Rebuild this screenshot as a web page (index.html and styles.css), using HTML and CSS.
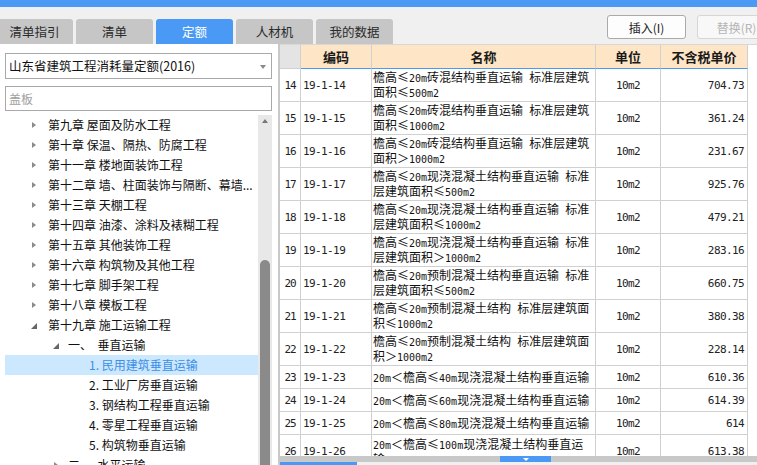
FILE: index.html
```html
<!DOCTYPE html>
<html lang="zh-CN">
<head>
<meta charset="utf-8">
<title>定额</title>
<link rel="stylesheet" href="styles.css">
</head>
<body>
<div class="app">
  <div class="topbar"></div>
  <div class="toolbar">
    <div class="tabs">
      <div class="tab">清单指引</div>
      <div class="tab">清单</div>
      <div class="tab active">定额</div>
      <div class="tab">人材机</div>
      <div class="tab">我的数据</div>
    </div>
    <div class="actions">
      <button class="btn">插入(I)</button>
      <button class="btn disabled">替换(R)</button>
    </div>
  </div>
  <div class="main">
    <aside class="side">
      <div class="select">山东省建筑工程消耗量定额(2016)<span class="caret"></span></div>
      <div class="search">盖板</div>
      <div class="treewrap">
        <ul class="tree">
          <li class="l1"><i class="arr"><b class="tri-r"></b></i>第九章 屋面及防水工程</li>
          <li class="l1"><i class="arr"><b class="tri-r"></b></i>第十章 保温、隔热、防腐工程</li>
          <li class="l1"><i class="arr"><b class="tri-r"></b></i>第十一章 楼地面装饰工程</li>
          <li class="l1"><i class="arr"><b class="tri-r"></b></i>第十二章 墙、柱面装饰与隔断、幕墙...</li>
          <li class="l1"><i class="arr"><b class="tri-r"></b></i>第十三章 天棚工程</li>
          <li class="l1"><i class="arr"><b class="tri-r"></b></i>第十四章 油漆、涂料及裱糊工程</li>
          <li class="l1"><i class="arr"><b class="tri-r"></b></i>第十五章 其他装饰工程</li>
          <li class="l1"><i class="arr"><b class="tri-r"></b></i>第十六章 构筑物及其他工程</li>
          <li class="l1"><i class="arr"><b class="tri-r"></b></i>第十七章 脚手架工程</li>
          <li class="l1"><i class="arr"><b class="tri-r"></b></i>第十八章 模板工程</li>
          <li class="l1"><i class="arr"><svg class="tri-d" width="6" height="6" viewBox="0 0 6 6"><polygon points="6,0 6,6 0,6"/></svg></i>第十九章 施工运输工程</li>
          <li class="l2"><i class="arr"><svg class="tri-d" width="6" height="6" viewBox="0 0 6 6"><polygon points="6,0 6,6 0,6"/></svg></i><span class="pre">一、  垂直运输</span></li>
          <li class="l3 sel">1. 民用建筑垂直运输</li>
          <li class="l3">2. 工业厂房垂直运输</li>
          <li class="l3">3. 钢结构工程垂直运输</li>
          <li class="l3">4. 零星工程垂直运输</li>
          <li class="l3">5. 构筑物垂直运输</li>
          <li class="l2"><i class="arr"><b class="tri-r"></b></i><span class="pre">二、  水平运输</span></li>
        </ul>
        <div class="vscroll"><span class="up"></span><span class="thumb"></span></div>
      </div>
    </aside>
    <section class="grid">
      <div class="tablewrap">
        <table class="quota">
          <thead>
            <tr>
              <th class="rn"></th>
              <th class="code">编码</th>
              <th class="name">名称</th>
              <th class="unit">单位</th>
              <th class="price">不含税单价</th>
            </tr>
          </thead>
          <tbody>
            <tr class="two"><td class="rn">14</td><td class="code">19-1-14</td><td class="name">檐高≤<span class="a">20m</span>砖混结构垂直运输<span class="a"> </span>标准层建筑<br>面积≤<span class="a">500m2</span></td><td class="unit">10m2</td><td class="price">704.73</td></tr>
            <tr class="two"><td class="rn">15</td><td class="code">19-1-15</td><td class="name">檐高≤<span class="a">20m</span>砖混结构垂直运输<span class="a"> </span>标准层建筑<br>面积≤<span class="a">1000m2</span></td><td class="unit">10m2</td><td class="price">361.24</td></tr>
            <tr class="two"><td class="rn">16</td><td class="code">19-1-16</td><td class="name">檐高≤<span class="a">20m</span>砖混结构垂直运输<span class="a"> </span>标准层建筑<br>面积＞<span class="a">1000m2</span></td><td class="unit">10m2</td><td class="price">231.67</td></tr>
            <tr class="two"><td class="rn">17</td><td class="code">19-1-17</td><td class="name">檐高≤<span class="a">20m</span>现浇混凝土结构垂直运输<span class="a"> </span>标准<br>层建筑面积≤<span class="a">500m2</span></td><td class="unit">10m2</td><td class="price">925.76</td></tr>
            <tr class="two"><td class="rn">18</td><td class="code">19-1-18</td><td class="name">檐高≤<span class="a">20m</span>现浇混凝土结构垂直运输<span class="a"> </span>标准<br>层建筑面积≤<span class="a">1000m2</span></td><td class="unit">10m2</td><td class="price">479.21</td></tr>
            <tr class="two"><td class="rn">19</td><td class="code">19-1-19</td><td class="name">檐高≤<span class="a">20m</span>现浇混凝土结构垂直运输<span class="a"> </span>标准<br>层建筑面积＞<span class="a">1000m2</span></td><td class="unit">10m2</td><td class="price">283.16</td></tr>
            <tr class="two"><td class="rn">20</td><td class="code">19-1-20</td><td class="name">檐高≤<span class="a">20m</span>预制混凝土结构垂直运输<span class="a"> </span>标准<br>层建筑面积≤<span class="a">500m2</span></td><td class="unit">10m2</td><td class="price">660.75</td></tr>
            <tr class="two"><td class="rn">21</td><td class="code">19-1-21</td><td class="name">檐高≤<span class="a">20m</span>预制混凝土结构<span class="a"> </span>标准层建筑面<br>积≤<span class="a">1000m2</span></td><td class="unit">10m2</td><td class="price">380.38</td></tr>
            <tr class="two"><td class="rn">22</td><td class="code">19-1-22</td><td class="name">檐高≤<span class="a">20m</span>预制混凝土结构<span class="a"> </span>标准层建筑面<br>积＞<span class="a">1000m2</span></td><td class="unit">10m2</td><td class="price">228.14</td></tr>
            <tr class="one"><td class="rn">23</td><td class="code">19-1-23</td><td class="name"><span class="a">20m</span>＜檐高≤<span class="a">40m</span>现浇混凝土结构垂直运输</td><td class="unit">10m2</td><td class="price">610.36</td></tr>
            <tr class="one"><td class="rn">24</td><td class="code">19-1-24</td><td class="name"><span class="a">20m</span>＜檐高≤<span class="a">60m</span>现浇混凝土结构垂直运输</td><td class="unit">10m2</td><td class="price">614.39</td></tr>
            <tr class="one"><td class="rn">25</td><td class="code">19-1-25</td><td class="name"><span class="a">20m</span>＜檐高≤<span class="a">80m</span>现浇混凝土结构垂直运输</td><td class="unit">10m2</td><td class="price">614</td></tr>
            <tr class="two"><td class="rn">26</td><td class="code">19-1-26</td><td class="name"><span class="a">20m</span>＜檐高≤<span class="a">100m</span>现浇混凝土结构垂直运<br>输</td><td class="unit">10m2</td><td class="price">613.38</td></tr>
          </tbody>
        </table>
      </div>
      <div class="splitter"><span class="toggle"><b></b></span></div>
      <div class="bottomtabs"><span class="btab"></span></div>
    </section>
  </div>
</div>
</body>
</html>
```

FILE: styles.css
```css
* { box-sizing: border-box; }
html, body { margin: 0; padding: 0; }
body {
  width: 757px;
  height: 465px;
  overflow: hidden;
  font-family: "Noto Sans CJK SC", "Liberation Sans", sans-serif;
  font-size: 12px;
  color: #222;
  background: #f0f0f0;
}
.app { display: flex; flex-direction: column; height: 465px; }
.topbar { height: 7px; background: #4a9af5; flex-shrink: 0; }
.toolbar {
  height: 37px;
  flex-shrink: 0;
  display: flex;
  background: #f0f0f0;
  overflow: hidden;
}
.tabs {
  display: flex;
  gap: 3px;
  margin-left: -4px;
  align-items: flex-end;
  flex-shrink: 0;
}
.tab {
  width: 77px;
  height: 25px;
  line-height: 25px;
  text-align: center;
  background: #c6c6c6;
  color: #2a2a2a;
  border-radius: 3px 3px 0 0;
  font-size: 12.5px;
}
.tab.active { background: #4a9af5; color: #fff; }
.actions {
  display: flex;
  gap: 11px;
  margin-left: 214px;
  margin-top: 8px;
  flex-shrink: 0;
  align-self: flex-start;
}
.btn {
  width: 79px;
  height: 24px;
  border: 1px solid #aaaaaa;
  border-radius: 3px;
  background: #fdfdfd;
  font-family: "Noto Sans CJK SC", sans-serif;
  font-size: 12px;
  color: #222;
  padding: 0;
}
.btn.disabled { border-color: #d6d6d6; color: #b4b4b4; background: #f8f8f8; }

.main { display: flex; flex: 1; min-height: 0; }
.side {
  width: 279px;
  flex-shrink: 0;
  background: #fff;
  border-right: 1px solid #c8c8c8;
  padding: 9px 0 0 5px;
  overflow: hidden;
}
.select {
  position: relative;
  width: 267px;
  height: 26px;
  border: 1px solid #a9a9a9;
  padding-left: 3px;
  line-height: 24px;
  font-size: 12.5px;
  color: #111;
}
.caret {
  position: absolute;
  right: 5px;
  top: 11px;
  border-left: 3.5px solid transparent;
  border-right: 3.5px solid transparent;
  border-top: 4px solid #8a8a8a;
}
.search {
  margin-top: 7px;
  width: 267px;
  height: 25px;
  border: 1px solid #a9a9a9;
  padding-left: 3px;
  line-height: 23px;
  color: #a0a0a0;
}
.treewrap { display: flex; margin-top: 4px; height: 360px; }
.tree {
  list-style: none;
  margin: 0;
  padding: 0;
  width: 253px;
  flex-shrink: 0;
}
.tree li {
  height: 20px;
  line-height: 20px;
  display: flex;
  align-items: center;
  white-space: nowrap;
  overflow: hidden;
  color: #111;
}
.tree .pre { white-space: pre; }
.arr { display: inline-flex; align-items: center; height: 20px; flex-shrink: 0; }
.l1 { padding-left: 26px; }
.l1 .arr { width: 17px; }
.l2 { padding-left: 48px; }
.l2 .arr { width: 15px; }
.l3 { padding-left: 84px; }
.tree li.sel { background: #cce8ff; color: #3b8ee6; }
.tri-r {
  display: block;
  margin-left: 1px;
  border-top: 3.5px solid transparent;
  border-bottom: 3.5px solid transparent;
  border-left: 4px solid #8a8a8a;
}
.tri-d { display: block; fill: #666; margin-top: 2px; }
.vscroll {
  width: 14px;
  flex-shrink: 0;
  background: #e8e8e8;
  position: relative;
}
.vscroll .up {
  position: absolute;
  left: 4px;
  top: 4px;
  border-left: 3px solid transparent;
  border-right: 3px solid transparent;
  border-bottom: 4px solid #777;
}
.vscroll .thumb {
  position: absolute;
  left: 2px;
  top: 145px;
  width: 10px;
  height: 260px;
  background: #8a8a8a;
  border-radius: 5px 5px 0 0;
}

.grid {
  flex: 1;
  display: flex;
  flex-direction: column;
  border-left: 1px solid #c8c8c8;
  background: #fff;
  min-width: 0;
}
.tablewrap {
  height: 412px;
  flex-shrink: 0;
  border-top: 1px solid #d8d8d8;
  overflow: hidden;
  background: #fff;
}
.quota {
  border-collapse: separate;
  border-spacing: 0;
  table-layout: fixed;
  width: 468px;
}
.quota th, .quota td {
  padding: 0;
  border-right: 1px solid #d0d0d0;
  border-bottom: 1px solid #d0d0d0;
  overflow: hidden;
  white-space: nowrap;
}
.quota th {
  height: 24px;
  background: #fde5c6;
  font-weight: bold;
  font-size: 13px;
  text-align: center;
  color: #1a1a1a;
  border-bottom-color: #4a9af5;
}
.quota th.rn { background: #e4e4e4; border-bottom-color: #d0d0d0; }
.quota .rn { width: 21px; }
.quota .code { width: 71px; }
.quota .name { width: 224px; }
.quota .unit { width: 65px; }
.quota .price { width: 87px; }
.quota tr.two td { height: 33px; }
.quota tr.one td { height: 23px; }
.quota td.rn {
  text-align: center;
  font-family: "DejaVu Sans Mono", monospace;
  font-size: 11px;
  letter-spacing: -1px;
}
.quota td.code {
  font-family: "DejaVu Sans Mono", monospace;
  font-size: 11px;
  letter-spacing: -0.6px;
  padding-left: 2px;
}
.quota td.name {
  font-size: 12px;
  line-height: 14px;
  padding-left: 1px;
  color: #111;
}
.quota td.name .a {
  font-family: "DejaVu Sans Mono", monospace;
  font-size: 10px;
  line-height: 12px;
}
.quota td.unit {
  text-align: center;
  font-family: "DejaVu Sans Mono", monospace;
  font-size: 11px;
  letter-spacing: -0.6px;
}
.quota td.price {
  text-align: right;
  font-family: "DejaVu Sans Mono", monospace;
  font-size: 11px;
  letter-spacing: -0.6px;
  padding-right: 3px;
}
.splitter {
  height: 6px;
  flex-shrink: 0;
  background: #c8c8c8;
  display: flex;
}
.toggle {
  margin-left: 220px;
  width: 51px;
  height: 6px;
  background: #4a9af5;
  display: flex;
  justify-content: center;
  align-items: center;
}
.toggle b {
  border-left: 3px solid transparent;
  border-right: 3px solid transparent;
  border-top: 3px solid #fff;
}
.bottomtabs { flex: 1; background: #f0f0f0; display: flex; }
.btab { width: 77px; background: #4a9af5; }
```
